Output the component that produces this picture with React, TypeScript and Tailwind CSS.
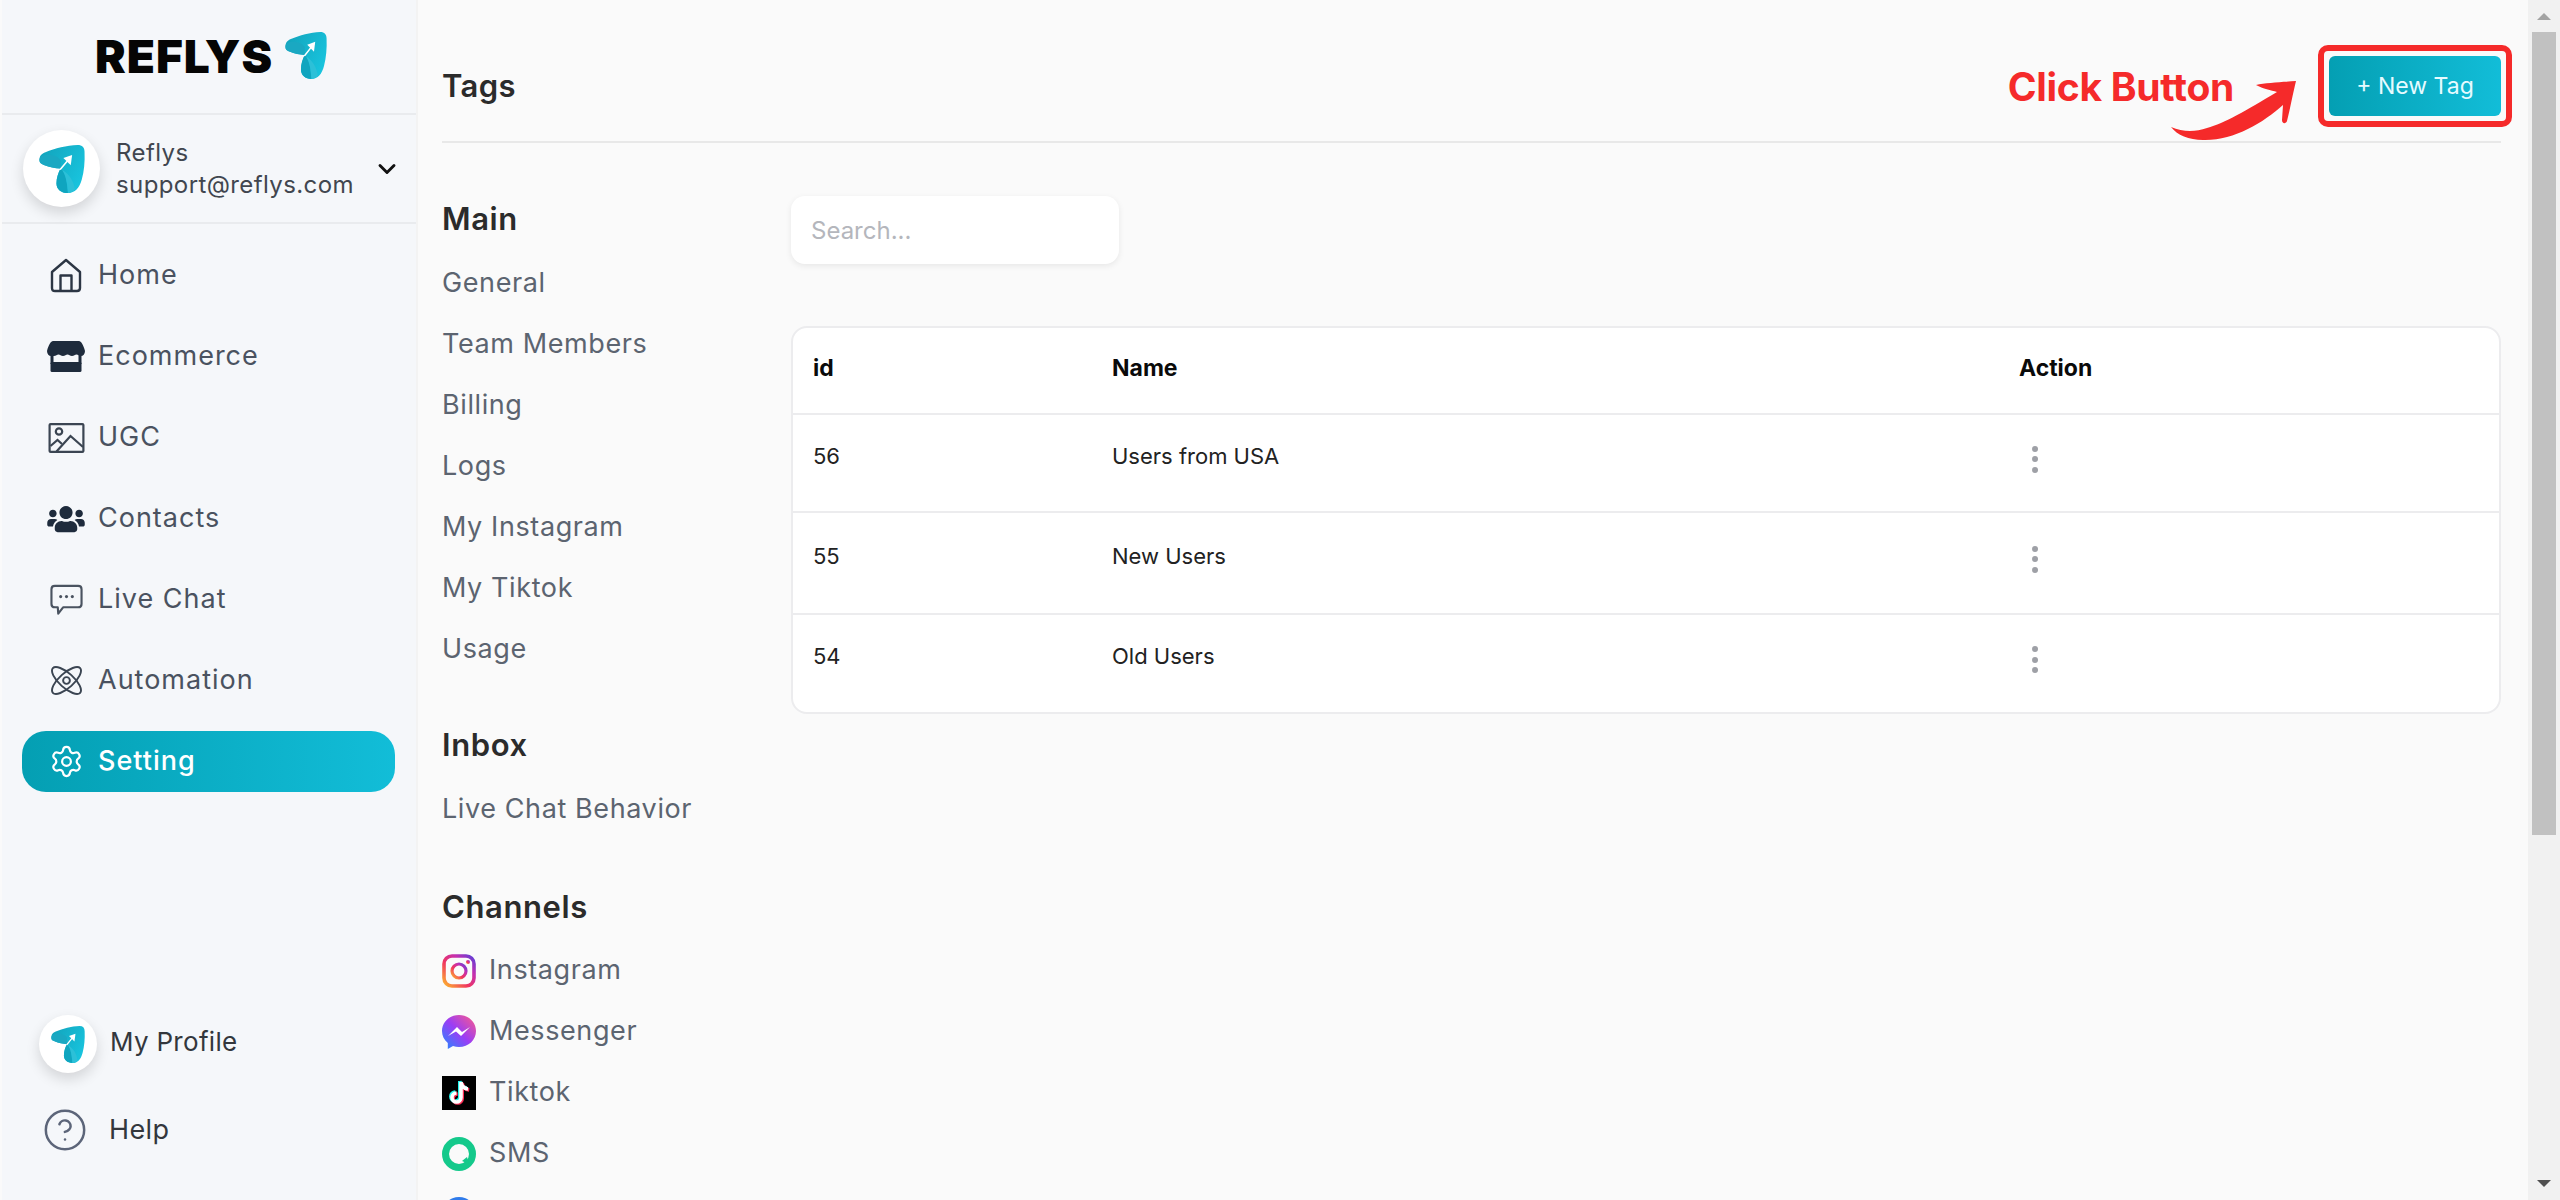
import { ChevronDown, CircleHelp, Settings } from "lucide-react";
import { FaUsers } from "react-icons/fa";

function LogoMark({ className }: { className: string }) {
  return (
    <svg viewBox="0 0 100 100" preserveAspectRatio="none" className={className}>
      <defs>
        <linearGradient id="logoFill" x1="0" y1="0" x2="1" y2="0.600">
          <stop offset="0" stopColor="#12a2ba" />
          <stop offset="1" stopColor="#18c3dd" />
        </linearGradient>
      </defs>
      <path
        d="M1 32C1 22 6 18 14 15C35 7 60 1 84 0C94 0 99 5 99 14C100 35 98 55 93 72C88 90 78 100 63 100C48 100 38 92 38 80C38 68 42 58 47 49C35 48 22 46 12 42C5 40 1 38 1 32Z"
        fill="url(#logoFill)"
      />
      <path d="M1 32C1 26 6 22 14 21C28 19 42 24 47 32L47 49C35 48 22 46 12 42C5 40 1 38 1 32Z" fill="#1aa8c2" />
      <path d="M47 49C58 56 60 74 63 100C48 100 38 92 38 80C38 68 42 58 47 49Z" fill="#0fa5bf" />
      <path d="M50 52C66 60 76 76 78 93C72 98 68 100 63 100C62 80 58 62 50 52Z" fill="#2cc0d8" />
      <path d="M47 50L68 26" stroke="#fff" strokeWidth="3.500" strokeLinecap="round" />
      <path d="M53 27L72 21L69 42Z" fill="#fff" />
    </svg>
  );
}

function Avatar({ size, mark }: { size: string; mark: string }) {
  return (
    <div className={`${size} shrink-0 rounded-full bg-white shadow-[0_6px_14px_rgba(0,0,0,0.14)] flex items-center justify-center`}>
      <LogoMark className={mark} />
    </div>
  );
}

function HomeIcon() {
  return (
    <svg viewBox="0 0 32 35" className="w-[32px] h-[35px]" fill="none" stroke="#2c3644" strokeWidth="2.400" strokeLinejoin="round">
      <path d="M2 14L16 2L30 14V30C30 32 29 33 27 33H5C3 33 2 32 2 30Z" />
      <path d="M10.500 33V17.500H21.500V33" />
    </svg>
  );
}

function StoreIcon() {
  return (
    <svg viewBox="0 0 38 31" className="w-[38px] h-[31px]" fill="#1e2b3c">
      <path d="M6 0H32C34 0 36.500 4 38 10C38 13 36 15 34 15C32 15 31 13.500 29.500 13.500C28 13.500 27 15 25 15C23 15 22 13.500 20.500 13.500C19 13.500 18 15 16 15C14 15 13 13.500 11.500 13.500C10 13.500 9 15 7 15H4C2 15 0 13 0 10C1.500 4 4 0 6 0Z" />
      <rect x="3.500" y="14" width="3" height="9" />
      <rect x="31.500" y="14" width="3" height="9" />
      <rect x="3.500" y="21" width="31" height="10" rx="1.500" />
    </svg>
  );
}

function ImageIcon() {
  return (
    <svg viewBox="0 0 36 30" className="w-[37px] h-[30px]" fill="none" stroke="#3b4552" strokeWidth="2.200">
      <rect x="1.100" y="1.100" width="33.800" height="27.800" rx="1" />
      <circle cx="10.500" cy="8.500" r="3.200" />
      <path d="M8 28.500L22 13L34.500 24" />
      <path d="M2 23L9 17L13.500 21" />
    </svg>
  );
}

function ChatIcon() {
  return (
    <svg viewBox="0 0 34 32" className="w-[33px] h-[32px]" fill="none" stroke="#4a5360" strokeWidth="2.200">
      <path d="M5 1.500H29C31.200 1.500 32.500 3 32.500 5V20C32.500 22 31 23.500 29 23.500H13.500L8.500 30L8 23.500H5C3 23.500 1.500 22 1.500 20V5C1.500 3 3 1.500 5 1.500Z" strokeLinejoin="round" />
      <circle cx="11" cy="12.500" r="1.600" fill="#4a5360" stroke="none" />
      <circle cx="17" cy="12.500" r="1.600" fill="#4a5360" stroke="none" />
      <circle cx="23" cy="12.500" r="1.600" fill="#4a5360" stroke="none" />
    </svg>
  );
}

function AtomIcon() {
  return (
    <svg viewBox="0 0 32 30" className="w-[31px] h-[29px]" fill="none" stroke="#3b4552" strokeWidth="2">
      <ellipse cx="16" cy="15" rx="19" ry="7.500" transform="rotate(42 16 15)" />
      <ellipse cx="16" cy="15" rx="19" ry="7.500" transform="rotate(-42 16 15)" />
      <circle cx="16" cy="15" r="3.500" />
    </svg>
  );
}

function InstagramIcon() {
  return (
    <svg viewBox="0 0 34 34" className="w-[34px] h-[34px]" fill="none">
      <defs>
        <linearGradient id="igFill" x1="0" y1="1" x2="1" y2="0">
          <stop offset="0" stopColor="#fdb42d" />
          <stop offset="0.4" stopColor="#f0355f" />
          <stop offset="0.7" stopColor="#c42fb0" />
          <stop offset="1" stopColor="#5b3fd8" />
        </linearGradient>
      </defs>
      <rect x="2" y="2" width="30" height="30" rx="8" stroke="url(#igFill)" strokeWidth="3.600" />
      <circle cx="17" cy="17" r="7" stroke="url(#igFill)" strokeWidth="3.200" />
      <circle cx="26" cy="8" r="2" fill="url(#igFill)" />
    </svg>
  );
}

function MessengerIcon() {
  return (
    <svg viewBox="0 0 34 34" className="w-[34px] h-[34px]">
      <defs>
        <linearGradient id="msFill" x1="0" y1="1" x2="1" y2="0">
          <stop offset="0" stopColor="#1f8bff" />
          <stop offset="0.5" stopColor="#9b3df5" />
          <stop offset="1" stopColor="#ff5c87" />
        </linearGradient>
      </defs>
      <path d="M17 0C7.500 0 0 7 0 16C0 21 2.200 25 5.800 28V34L11 31C13 31.700 15 32 17 32C26.500 32 34 25 34 16C34 7 26.500 0 17 0Z" fill="url(#msFill)" />
      <path d="M6 21L15 12L20 17L28 12L19 21L14 16.500Z" fill="#fff" />
    </svg>
  );
}

function TiktokIcon() {
  const note = "M19 6V21.500A4.500 4.500 0 1 1 14.500 17M19 6C19.500 10 22 12.500 26 13";
  return (
    <svg viewBox="0 0 34 34" className="w-[34px] h-[34px]" fill="none" strokeWidth="3.600">
      <rect width="34" height="34" fill="#000" />
      <path d={note} stroke="#25f4ee" transform="translate(-1.200 -1)" />
      <path d={note} stroke="#fe2c55" transform="translate(1.200 1)" />
      <path d={note} stroke="#fff" />
    </svg>
  );
}

function SmsIcon() {
  return (
    <svg viewBox="0 0 34 34" className="w-[34px] h-[34px]" fill="none">
      <circle cx="17" cy="17" r="13.500" stroke="#14c98b" strokeWidth="7" />
      <path d="M20 24L27 27L25 20Z" fill="#14c98b" />
    </svg>
  );
}

const navItems = [
  { label: "Home", icon: <HomeIcon /> },
  { label: "Ecommerce", icon: <StoreIcon /> },
  { label: "UGC", icon: <ImageIcon /> },
  { label: "Contacts", icon: <FaUsers className="w-[38px] h-[30px] text-[#1e2b3c]" /> },
  { label: "Live Chat", icon: <ChatIcon /> },
  { label: "Automation", icon: <AtomIcon /> },
];

const mainLinks = ["General", "Team Members", "Billing", "Logs", "My Instagram", "My Tiktok", "Usage"];

const channels = [
  { label: "Instagram", icon: <InstagramIcon /> },
  { label: "Messenger", icon: <MessengerIcon /> },
  { label: "Tiktok", icon: <TiktokIcon /> },
  { label: "SMS", icon: <SmsIcon /> },
];

const rows = [
  { id: 56, name: "Users from USA", height: "h-[98px]" },
  { id: 55, name: "New Users", height: "h-[102px]" },
  { id: 54, name: "Old Users", height: "h-[97px]" },
];

function NavRow({ label, icon }: { label: string; icon: React.ReactNode }) {
  return (
    <div className="h-[61px] flex items-center pl-[45px]">
      <div className="w-[38px] flex justify-center shrink-0">{icon}</div>
      <span className="ml-[13px] text-[27px] text-[#4a5260] tracking-[1px]">{label}</span>
    </div>
  );
}

function SubHeading({ children, className }: { children: React.ReactNode; className?: string }) {
  return <div className={`h-[40px] mb-[13px] flex items-center text-[31px] font-semibold text-[#2b2b2b] tracking-[0.6px] ${className ?? ""}`}>{children}</div>;
}

function SubLink({ children }: { children: React.ReactNode }) {
  return <div className="h-[61px] pt-[2px] flex items-center text-[27px] text-[#5c6470] tracking-[0.6px] whitespace-nowrap">{children}</div>;
}

function Dots() {
  return (
    <div className="ml-[13px] mt-[6px] flex flex-col gap-[4.500px]">
      <span className="w-[6px] h-[6px] rounded-full bg-[#9ea0a6]" />
      <span className="w-[6px] h-[6px] rounded-full bg-[#9ea0a6]" />
      <span className="w-[6px] h-[6px] rounded-full bg-[#9ea0a6]" />
    </div>
  );
}

export default function App() {
  return (
    <div className="flex h-[1200px] w-full overflow-hidden bg-[#fafafa] font-['Inter',sans-serif]">
      <aside className="w-[414px] shrink-0 ml-[2px] flex flex-col bg-[#f5f7fa]">
        <div className="h-[115px] shrink-0 flex items-center justify-center border-b-2 border-[#e9ebee] pl-[4px] pb-[2px]">
          <span className="text-[46px] font-black leading-none text-[#050505] tracking-[1px]">REFLYS</span>
          <LogoMark className="ml-[12px] w-[42px] h-[47px]" />
        </div>
        <div className="h-[109px] shrink-0 flex items-center border-b-2 border-[#e9ebee] pl-[21px]">
          <Avatar size="w-[77px] h-[77px]" mark="w-[46px] h-[48px]" />
          <div className="ml-[16px] text-[24px] leading-[32px] text-[#41464f] tracking-[0.4px]">
            <div>Reflys</div>
            <div>support@reflys.com</div>
          </div>
          <ChevronDown className="ml-[19px] w-[28px] h-[28px] text-[#111]" strokeWidth={2.500} />
        </div>
        <nav className="pt-[21px] flex flex-col gap-[20px]">
          {navItems.map((item) => (
            <NavRow key={item.label} label={item.label} icon={item.icon} />
          ))}
          <div className="h-[61px] w-[373px] ml-[20px] flex items-center pl-[25px] rounded-[24px] bg-linear-to-r from-[#049fb3] to-[#12bdd8]">
            <div className="w-[38px] flex justify-center shrink-0">
              <Settings className="w-[35px] h-[35px] text-white" strokeWidth={1.500} />
            </div>
            <span className="ml-[13px] text-[27px] font-medium text-white tracking-[1px]">Setting</span>
          </div>
        </nav>
        <div className="mt-auto pl-[37px] pb-[47px] flex flex-col">
          <div className="flex items-center">
            <Avatar size="w-[58px] h-[58px]" mark="w-[34px] h-[37px]" />
            <span className="ml-[13px] -mt-[6px] text-[26px] text-[#33373d] tracking-[0.3px]">My Profile</span>
          </div>
          <div className="mt-[34px] flex items-center">
            <CircleHelp className="ml-[3px] w-[46px] h-[46px] text-[#5c6579]" strokeWidth={1.300} />
            <span className="ml-[21px] text-[27px] text-[#33373d] tracking-[0.4px]">Help</span>
          </div>
        </div>
      </aside>

      <main className="flex-1 min-w-0 pl-[24px] pr-[27px] border-l-2 border-[#f3f3f3]">
        <header className="h-[143px] flex items-center justify-between border-b-2 border-[#e8e8e8] pt-[31px]">
          <h1 className="text-[31px] font-semibold text-[#2b2b2b] tracking-[0.4px]">Tags</h1>
          <div className="flex items-center">
            <span className="mr-[95px] mt-[2px] text-[39px] font-bold text-[#f52a2a] tracking-[-0.3px]">Click Button</span>
            <div className="relative">
              <button className="w-[172px] h-[60px] rounded-[6px] text-[23px] text-[#e6fbff] bg-linear-to-r from-[#049fb3] to-[#12bdd8]">
                + New Tag
              </button>
              <div className="absolute -inset-[11px] border-[6px] border-[#f52a2a] rounded-[10px]" />
              <svg viewBox="0 0 126 60" className="absolute left-[-158px] top-[25px] w-[126px] h-[60px]" fill="#f52a2a">
                <path d="M0 46C12 51 24 51 36 47C54 42 74 30 106 11C100 9 92 8 85 4C95 2 112 1 125 0C122 12 119 28 116 40C115 43 111 43 111 39L112 24C92 42 62 60 32 59C18 59 6 54 0 46Z" />
              </svg>
            </div>
          </div>
        </header>

        <div className="flex">
          <div className="w-[349px] shrink-0 pt-[56px]">
            <SubHeading>Main</SubHeading>
            {mainLinks.map((link) => (
              <SubLink key={link}>{link}</SubLink>
            ))}
            <SubHeading className="mt-[46px]">Inbox</SubHeading>
            <SubLink>Live Chat Behavior</SubLink>
            <SubHeading className="mt-[48px]">Channels</SubHeading>
            {channels.map((channel) => (
              <div key={channel.label} className="h-[61px] flex items-center gap-[13px] text-[27px] text-[#5c6470] tracking-[0.6px]">
                {channel.icon}
                <span>{channel.label}</span>
              </div>
            ))}
            <div className="mt-[13px] w-[34px] h-[34px] rounded-full bg-[#2f7bea]" />
          </div>

          <div className="flex-1 min-w-0 pt-[53px]">
            <input
              placeholder="Search..."
              className="w-[328px] h-[68px] px-[20px] rounded-[14px] bg-white text-[24px] shadow-[0_2px_6px_rgba(0,0,0,0.08)] outline-none placeholder:text-[#b4b6bc]"
            />
            <div className="mt-[62px] rounded-[16px] border-2 border-[#ececee] bg-white text-[22px] text-[#222]">
              <div className="h-[87px] grid grid-cols-[299px_907px_1fr] items-center pl-[20px] pb-[4px] text-[23px] font-bold text-[#0a0a0a] border-b-2 border-[#ececee]">
                <span>id</span>
                <span>Name</span>
                <span>Action</span>
              </div>
              {rows.map((row, i) => (
                <div
                  key={row.id}
                  className={`${row.height} grid grid-cols-[299px_907px_1fr] items-center pl-[20px] pb-[14px] ${i < rows.length - 1 ? "border-b-2 border-[#ececee]" : ""}`}
                >
                  <span>{row.id}</span>
                  <span>{row.name}</span>
                  <Dots />
                </div>
              ))}
            </div>
          </div>
        </div>
      </main>

      <div className="w-[32px] shrink-0 flex flex-col items-center bg-[#f1f1f1]">
        <div className="h-[32px] flex items-center justify-center">
          <div className="w-0 h-0 border-x-[7px] border-x-transparent border-b-[7px] border-b-[#a3a3a3]" />
        </div>
        <div className="h-[803px] w-[24px] bg-[#c1c1c1]" />
        <div className="mt-auto h-[34px] flex items-center justify-center">
          <div className="w-0 h-0 border-x-[7px] border-x-transparent border-t-[7px] border-t-[#505050]" />
        </div>
      </div>
    </div>
  );
}
